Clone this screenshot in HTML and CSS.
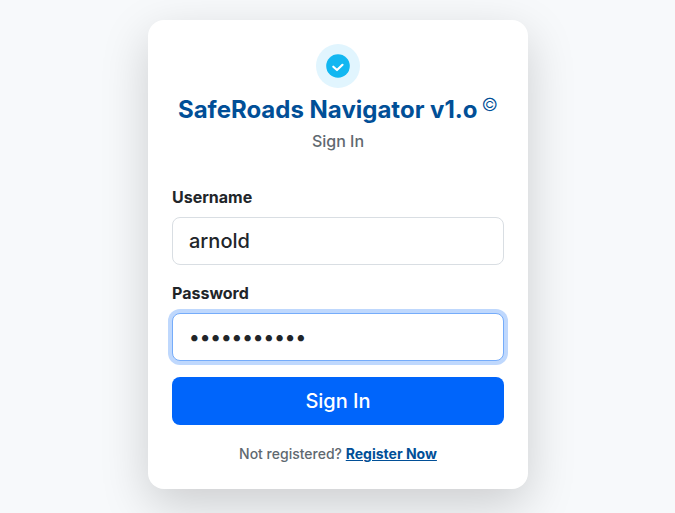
FILE: index.html
```html
<!DOCTYPE html>
<html lang="en">
<head>
<meta charset="utf-8">
<title>SafeRoads Navigator</title>
<link rel="stylesheet" href="styles.css">
</head>
<body>
<main class="card">
  <header class="brand">
    <span class="badge">
      <svg width="24" height="24" viewBox="0 0 24 24"><circle cx="12" cy="12" r="11.8" fill="#12b7f1"/><path d="M7.3 12.7l3.7 3.3 5.5-5.2" fill="none" stroke="#fff" stroke-width="2.2" stroke-linecap="round" stroke-linejoin="round"/></svg>
    </span>
    <h1 class="title"><span>SafeRoads Navigator v1.o</span><sup>©</sup></h1>
    <p class="subtitle">Sign In</p>
  </header>
  <form class="form">
    <label class="label" for="user">Username</label>
    <input class="field" id="user" type="text" value="arnold">
    <label class="label" for="pass">Password</label>
    <input class="field field-active" id="pass" type="password" value="abcdefghijk">
    <button class="submit" type="button">Sign In</button>
  </form>
  <p class="footer">Not registered? <a href="#">Register Now</a></p>
</main>
</body>
</html>
```
FILE: styles.css
```css
* { box-sizing: border-box; }
body {
  margin: 0;
  height: 513px;
  overflow: hidden;
  padding-top: 20px;
  background: #f7f9fb;
  color: #212529;
  font-family: Inter, sans-serif;
  font-size: 16px;
  line-height: 24px;
}
.card {
  width: 380px;
  height: 469px;
  margin: 0 auto 0 148px;
  padding: 24px;
  background: #fff;
  border-radius: 16px;
  box-shadow: 0 16px 48px rgba(0, 0, 0, .175);
}
.brand { display: flex; flex-direction: column; align-items: center; }
.badge {
  display: flex;
  align-items: center;
  justify-content: center;
  width: 44px;
  height: 44px;
  border-radius: 50%;
  background: #e1f5fe;
}
.title {
  margin: 4px 0 0;
  color: #014f97;
  font-size: 24px;
  font-weight: 700;
  line-height: 36px;
  white-space: nowrap;
}
.title sup {
  position: relative;
  top: 2px;
  margin-left: 4px;
  font-size: 18px;
  font-weight: 300;
  line-height: 0;
}
.subtitle { margin: 1px 0 0; color: #5f6970; font-weight: 500; }
.form { display: flex; flex-direction: column; margin-top: 32px; }
.label { margin-bottom: 8px; font-weight: 700; }
.field {
  height: 48px;
  margin: 0 0 16px;
  padding: 8px 16px;
  border: 1px solid #d9dee3;
  border-radius: 8px;
  background: #fff;
  color: #212529;
  font: 460 20px/30px Inter, sans-serif;
  outline: 0;
}
.field-active { border-color: #75acfa; box-shadow: 0 0 0 4px #bfd8fd; letter-spacing: -.02px; }
.submit {
  height: 48px;
  padding: 0;
  border: 0;
  border-radius: 8px;
  background: #0065fb;
  color: #fff;
  font: 500 20px/30px Inter, sans-serif;
}
.footer { margin: 18px 0 0; color: #5f6970; font-size: 14px; font-weight: 500; line-height: 21px; text-align: center; }
.footer a { color: #014f97; font-weight: 700; }
```
